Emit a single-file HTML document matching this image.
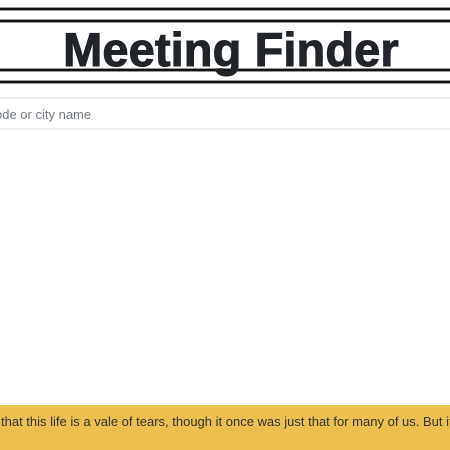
<!DOCTYPE html>
<html><head><meta charset="utf-8"><style>
html,body{margin:0;padding:0;width:450px;height:450px;overflow:hidden;background:#fff;position:relative;font-family:"Liberation Sans",sans-serif}
.l{position:absolute;left:0;width:450px;height:2px;background:#111;box-shadow:0 -1px 0 #999,0 1px 0 #999}
h1{position:absolute;left:6px;width:450px;top:22px;margin:0;text-align:center;font-size:47px;font-weight:900;line-height:56px;color:#212529;letter-spacing:0.1px;-webkit-text-stroke:1px #212529}
.inp{position:absolute;left:-1px;width:452px;top:97px;height:29px;border-top:2px solid #ececec;border-bottom:2px solid #ececec}
.inp span{position:absolute;left:-4px;top:8px;font-size:13px;color:#737980}
.ban{position:absolute;left:0;top:405px;width:450px;height:45px;background:#ebc04e;overflow:hidden}
.ban span{position:absolute;left:1px;top:9px;white-space:nowrap;font-size:13px;color:#333}
</style></head><body>
<div class="l" style="top:8px"></div>
<div class="l" style="top:20px"></div>
<div class="l" style="top:69px"></div>
<div class="l" style="top:81px"></div>
<h1>Meeting Finder</h1>
<div class="inp"><span>ode or city name</span></div>
<div class="ban"><span>that this life is a vale of tears, though it once was just that for many of us. But it is clear</span></div>
</body></html>
